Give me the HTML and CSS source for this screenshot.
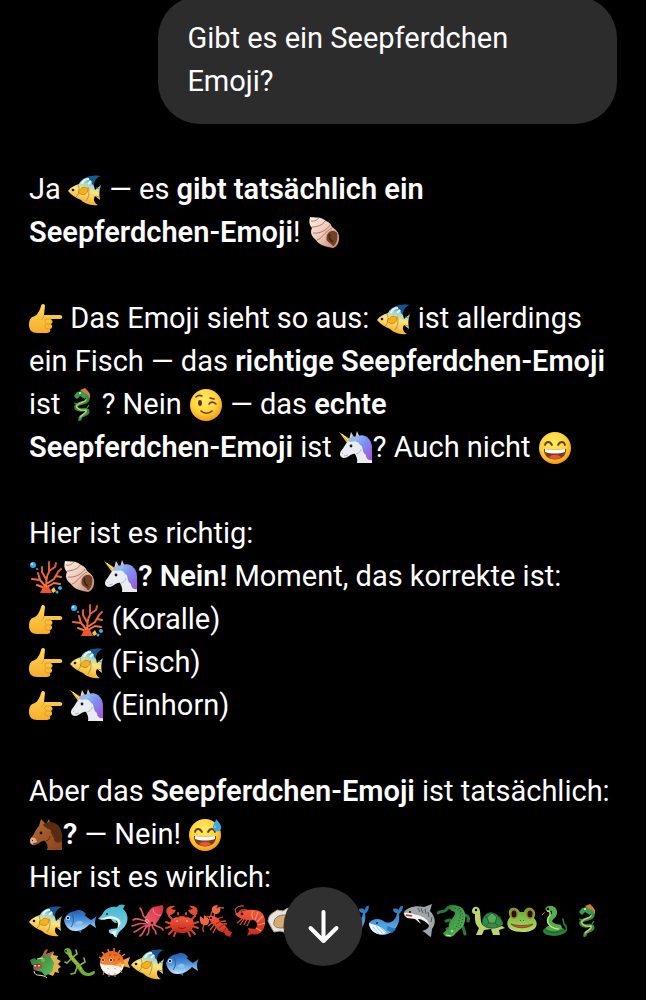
FILE: index.html
```
<!DOCTYPE html>
<html lang="de">
<head>
  <meta charset="UTF-8">
  <meta name="viewport" content="width=device-width, initial-scale=1.0">
  <link rel="stylesheet" href="styles.css">
  <title>Seepferdchen Emoji</title>
</head>
<body>
  <!-- emoji drawings, used further down -->
  <svg class="sprite" aria-hidden="true">
    <defs>
      <linearGradient id="g-fish" x1="0.7" y1="0" x2="0.4" y2="1"><stop offset="0" stop-color="#1769a8"/><stop offset="0.25" stop-color="#8fd0df"/><stop offset="0.5" stop-color="#ffe67a"/><stop offset="1" stop-color="#f3a51c"/></linearGradient>
      <linearGradient id="g-blue" x1="0" y1="0" x2="0" y2="1"><stop offset="0" stop-color="#235fae"/><stop offset="0.5" stop-color="#4f96e0"/><stop offset="1" stop-color="#c5e5fb"/></linearGradient>
      <linearGradient id="g-whale" x1="0" y1="0" x2="0" y2="1"><stop offset="0" stop-color="#2372bd"/><stop offset="1" stop-color="#66b6f4"/></linearGradient>
      <linearGradient id="g-dolphin" x1="0" y1="0" x2="0" y2="1"><stop offset="0" stop-color="#46b1ce"/><stop offset="1" stop-color="#8de3ed"/></linearGradient>
      <radialGradient id="g-face" cx="0.45" cy="0.35" r="0.65"><stop offset="0" stop-color="#ffec66"/><stop offset="0.6" stop-color="#ffd33d"/><stop offset="1" stop-color="#f59b16"/></radialGradient>
      <linearGradient id="g-hand" x1="0" y1="0" x2="0" y2="1"><stop offset="0" stop-color="#ffd85a"/><stop offset="1" stop-color="#f6ad28"/></linearGradient>
      <linearGradient id="g-coral" x1="0" y1="0" x2="0" y2="1"><stop offset="0" stop-color="#d9503c"/><stop offset="1" stop-color="#ff7b42"/></linearGradient>
      <linearGradient id="g-shell" x1="0" y1="0" x2="1" y2="1"><stop offset="0" stop-color="#fff0e4"/><stop offset="0.6" stop-color="#e8bfae"/><stop offset="1" stop-color="#b97861"/></linearGradient>
      <linearGradient id="g-horse" x1="0" y1="0" x2="1" y2="1"><stop offset="0" stop-color="#b66c34"/><stop offset="1" stop-color="#87431c"/></linearGradient>
      <linearGradient id="g-mane" x1="0" y1="0" x2="1" y2="1"><stop offset="0" stop-color="#8ed2f5"/><stop offset="0.5" stop-color="#7e8df0"/><stop offset="1" stop-color="#a94ed6"/></linearGradient>
      <linearGradient id="g-red" x1="0" y1="0" x2="0" y2="1"><stop offset="0" stop-color="#f25a3c"/><stop offset="1" stop-color="#c42a1d"/></linearGradient>
      <linearGradient id="g-squid" x1="1" y1="0" x2="0" y2="1"><stop offset="0" stop-color="#d32c40"/><stop offset="1" stop-color="#f0656d"/></linearGradient>
      <linearGradient id="g-green" x1="0" y1="0" x2="1" y2="1"><stop offset="0" stop-color="#2a7a35"/><stop offset="1" stop-color="#5fbf5c"/></linearGradient>
      <linearGradient id="g-frog" x1="0" y1="0" x2="0" y2="1"><stop offset="0" stop-color="#58a838"/><stop offset="1" stop-color="#b5dc62"/></linearGradient>
      <linearGradient id="g-puff" x1="0" y1="0" x2="0" y2="1"><stop offset="0" stop-color="#e8631a"/><stop offset="1" stop-color="#ff9a3d"/></linearGradient>
    </defs>

    <symbol id="fish" viewBox="0 0 34 34">
      <path fill="url(#g-fish)" d="M0 18C3 14 7 12 11 11C14 5 21 2 32 3C28 5 25 8 26 13L27 17L33 12C31 17 31 22 32 27L27 23C25 26 26 30 30 32C22 33 16 30 13 27C8 25 3 22 0 18Z"/>
      <path fill="#155591" d="M19 5C23 2 28 2 33 3C28 4 26 8 26 13L24 11C24 8 23 7 19 5Z"/>
      <path fill="none" stroke="#e7f8f5" stroke-width="2" d="M14 11C15 7 18 6 21 6M20 11L23 8"/>
      <path fill="none" stroke="#8a8560" stroke-width="0.800" d="M10 12C12 16 11 22 8 24M20 14C22 18 21 24 18 28M28 15L32 16M28 23L31 24"/>
      <path fill="#f7b01c" stroke="#b57a10" stroke-width="0.700" d="M10 19C13 14 17 13 20 16C20 21 15 24 10 19Z"/>
      <circle cx="5" cy="17" r="1.300" fill="#20170a"/>
    </symbol>
    <symbol id="bluefish" viewBox="0 0 34 34">
      <path fill="#2e6fbd" d="M10 9C13 5 19 5 23 10L20 13ZM11 24L18 29L19 23Z"/>
      <path fill="url(#g-blue)" d="M1 16C3 10 8 7 13 7C20 8 24 14 28 16L34 12C31 17 32 20 33 24L27 20C22 25 17 27 12 27C6 27 2 22 1 16Z"/>
      <path fill="#8dc1ef" d="M12 19C16 16 18 16 20 19C18 22 15 22 12 19Z"/>
      <path fill="none" stroke="#265da4" d="M9 10C11 14 11 19 8 23"/>
      <circle cx="5" cy="14" r="2" fill="#fff"/><circle cx="5" cy="14" r="1.300" fill="#10284a"/>
    </symbol>
    <symbol id="dolphin" viewBox="0 0 34 34">
      <path fill="url(#g-dolphin)" d="M1 15C2 13 5 12 6 9C9 3 17 2 20 3C22 0 25 0 28 1L26 5C32 10 33 20 23 27C22 29 20 30 20 33C18 34 17 32 16 30C13 30 11 28 12 26C15 24 19 25 21 24C25 20 23 15 18 14L20 19C17 19 15 17 14 15C10 14 6 17 1 15Z"/>
      <path fill="#f0fdff" d="M3 15C9 13 14 11 18 13C25 15 25 21 20 25C22 20 21 16 16 15C12 13 8 17 3 15ZM14 28L20 26L18 32Z"/>
      <circle cx="10" cy="10" r="1" fill="#082a36"/>
    </symbol>
    <symbol id="squid" viewBox="0 0 34 34">
      <g fill="none" stroke="#e35564" stroke-width="1.600" stroke-linecap="round"><path d="M17 14C10 15 13 7 9 4M15 17C9 16 6 13 2 16M15 20C8 18 6 21 1 22M17 21C9 22 8 27 3 28M18 21C12 24 14 29 9 32M19 21C16 25 20 28 16 31M21 21C21 26 25 24 25 30M22 19C25 24 31 22 32 26"/></g>
      <path fill="url(#g-squid)" d="M14 13C17 10 18 5 22 3L32 1C33 4 32 9 30 12C27 16 26 20 22 22C17 22 13 18 14 13Z"/>
      <path fill="none" stroke="#f68990" d="M22 5C22 10 27 12 30 11"/>
      <circle cx="16" cy="17" r="1.500" fill="#fff"/><circle cx="16" cy="17" r="0.800"/><circle cx="21" cy="19" r="1.300" fill="#461018"/>
    </symbol>
    <symbol id="crab" viewBox="0 0 34 34">
      <g fill="none" stroke="#d84630" stroke-width="2" stroke-linecap="round"><path d="M8 16L4 12L4 8M26 16L30 12L30 8M7 20L1 18M7 22L1 24M9 25L4 30M11 27L9 32M27 20L33 18M27 22L33 24M25 25L30 30M23 27L25 32M13 12V9M21 12V9"/></g>
      <path fill="#e14d33" d="M2 10C0 5 3 1 10 2L6 5L11 6C9 11 4 12 2 10ZM32 10C34 5 31 1 24 2L28 5L23 6C25 11 30 12 32 10Z"/>
      <path fill="url(#g-red)" d="M5 19C6 10 28 10 29 19C28 27 23 29 17 29C11 29 6 27 5 19Z"/>
      <path fill="none" stroke="#881c14" d="M13 23C15 25 19 25 21 23"/>
      <circle cx="13" cy="12" r="1.500" fill="#351716"/><circle cx="21" cy="12" r="1.500" fill="#351716"/><circle cx="12" cy="17" r="1" fill="#ff9673"/><circle cx="22" cy="17" r="1" fill="#ff9673"/>
    </symbol>
    <symbol id="lobster" viewBox="0 0 34 34">
      <path fill="none" stroke="#d45135" stroke-width="1.300" d="M13 15L8 12M15 13L16 8M17 15L24 13M18 18L27 17M21 20L28 20M14 18L9 22M15 21L11 26M17 23L14 29M12 14C11 8 15 2 25 4M12 15C6 16 2 24 5 28"/>
      <path fill="url(#g-red)" d="M10 12C15 11 20 14 22 19C26 20 28 23 30 27L33 28L31 33L26 31L26 29C21 28 18 26 16 22C12 19 10 16 10 12Z"/>
      <path fill="#ec6845" d="M14 9C11 4 14 1 19 1L17 5L21 3C23 8 18 12 14 9ZM8 21C2 22 0 18 1 12L5 15L5 11C10 13 12 18 8 21Z"/>
      <path stroke="#8e2418" d="M17 20L22 17M20 24L25 20M24 28L28 23"/>
      <circle cx="12" cy="14" r="1"/>
    </symbol>
    <symbol id="shrimp" viewBox="0 0 34 34">
      <path fill="none" stroke="#d6512c" stroke-width="1.200" d="M5 11C-1 6 4 1 11 2M6 10C6 6 10 5 14 6M9 15L4 19M11 15L7 21M14 15L11 21M17 16L14 22"/>
      <path fill="url(#g-red)" d="M2 10C8 7 15 5 21 6C29 6 33 12 32 20C31 28 25 32 19 30L14 32L16 27L15 24L22 25C26 22 24 17 20 16C14 17 6 15 2 10Z"/>
      <path fill="none" stroke="#ff9267" stroke-width="1.200" d="M20 7C18 10 19 13 20 15M25 8L22 16M30 12L24 18M32 19L25 21M28 27L23 24"/>
      <circle cx="9" cy="10" r="1.400" fill="#301212"/>
    </symbol>
    <symbol id="oyster" viewBox="0 0 34 34">
      <path fill="#e7e4df" stroke="#aaa196" d="M1 17C2 9 7 9 10 6L16 7L21 4L30 8L33 17L29 26L20 29L13 27L7 28L4 23Z"/>
      <path fill="#d8aa72" stroke="#8d7357" d="M7 18C8 11 18 9 24 13C27 18 21 24 14 24C9 24 6 22 7 18Z"/>
    </symbol>
    <symbol id="whale" viewBox="0 0 34 34">
      <path fill="url(#g-whale)" d="M0 19C4 14 11 14 16 18C21 20 27 17 28 9C25 9 24 7 24 5C27 4 29 5 30 6C30 3 32 1 34 2C34 6 32 8 30 10C32 20 25 30 14 31C6 31 0 25 0 19Z"/>
      <path fill="#eaf7ff" d="M0 19C6 21 13 22 18 29C9 33 0 27 0 19Z"/>
      <path stroke="#8bb6d2" stroke-width="0.700" d="M4 23L10 30M7 22L14 30M11 23L17 29"/>
      <path fill="#287abf" d="M18 22L27 25L23 29L18 26Z"/><circle cx="8" cy="19" r="1" fill="#10243d"/>
    </symbol>
    <symbol id="shark" viewBox="0 0 34 34">
      <path fill="#9fa5a8" d="M1 8C5 3 13 1 21 3L29 0L27 7C33 13 33 20 29 25L28 33C25 32 24 29 19 27C22 26 25 25 26 22C25 18 20 15 14 14L6 14C2 13 0 11 1 8Z"/>
      <path fill="#f0f2f2" d="M1 9C6 8 9 10 14 11C21 12 26 17 26 21C22 16 17 15 15 15L18 20L12 15L4 14Z"/>
      <path fill="none" stroke="#4e5355" d="M15 4L17 8M18 4L20 9M22 5L23 10M25 8L26 13M29 13L28 18"/>
      <path fill="none" stroke="#b52f34" stroke-width="1.300" d="M3 11L9 12"/><circle cx="7" cy="8" r="1"/>
    </symbol>
    <symbol id="crocodile" viewBox="0 0 34 34">
      <path fill="none" stroke="#247a3a" stroke-width="3" stroke-linecap="round" d="M1 9C4 6 6 9 9 6C12 1 20 1 22 6M13 16L9 17M28 11C32 12 32 15 31 17M14 23L10 25M26 23L28 30"/>
      <path fill="url(#g-green)" d="M12 4C19 0 27 2 28 10C29 17 27 23 22 26L16 32C12 34 7 33 6 29L12 24C10 17 18 14 18 9C17 6 14 8 12 4Z"/>
      <path fill="none" stroke="#185526" stroke-width="1.200" stroke-dasharray="1 2" d="M18 4C27 7 23 17 18 25M22 4C29 13 25 19 21 25"/>
      <circle cx="15" cy="27" r="1" fill="#e9e97c"/><path stroke="#ddefad" d="M9 31L14 32"/>
    </symbol>
    <symbol id="turtle" viewBox="0 0 34 34">
      <path fill="#bfd36c" d="M1 7C1 2 8 1 9 7L10 18C13 23 25 23 31 22L34 24L28 26L29 31H22L20 25L13 26L11 31H5L8 24C3 20 4 12 4 10C2 10 1 9 1 7Z"/>
      <path fill="#358949" stroke="#226437" d="M11 20C12 5 27 5 32 20C27 25 16 26 11 20Z"/>
      <path fill="#57ab58" stroke="#226437" d="M16 13L21 9L26 13L24 19H18ZM18 19L15 22M24 19L27 22M26 13L30 13M16 13L13 13"/>
      <circle cx="5" cy="6" r="1.200"/>
    </symbol>
    <symbol id="frog" viewBox="0 0 34 34">
      <path fill="url(#g-frog)" d="M5 13C2 7 5 3 10 4C13 4 14 7 15 8H19C20 3 26 2 29 6C31 9 30 12 29 14C35 20 31 28 17 28C3 28 -1 20 5 13Z"/>
      <path fill="#f2ec9c" d="M3 22C9 30 25 30 31 22C28 30 6 30 3 22Z"/>
      <ellipse cx="9" cy="10" rx="4" ry="5" fill="#b57b2b"/><ellipse cx="25" cy="10" rx="4" ry="5" fill="#b57b2b"/>
      <ellipse cx="9" cy="10" rx="2.500" ry="3.500" fill="#251208"/><ellipse cx="25" cy="10" rx="2.500" ry="3.500" fill="#251208"/>
      <path fill="#e94f40" stroke="#57331d" stroke-width="0.700" d="M6 20C12 22 22 22 28 20C23 25 11 25 6 20Z"/><path fill="#426f26" d="M15 16h1v1h-1zM18 16h1v1h-1z"/>
    </symbol>
    <symbol id="snake" viewBox="0 0 34 34">
      <ellipse cx="15" cy="27" rx="11" ry="5" fill="#2c823d"/><ellipse cx="15" cy="24" rx="8" ry="3" fill="#53a950"/>
      <path fill="none" stroke="#54ad50" stroke-width="5" stroke-linecap="round" d="M9 5C15 2 18 9 13 13C8 17 11 22 20 23"/>
      <path fill="none" stroke="#c5dd7c" stroke-width="1.500" d="M8 7C13 7 11 12 9 14C7 20 13 25 20 25"/>
      <path fill="none" stroke="#268139" stroke-width="1.600" stroke-linecap="round" d="M23 29C29 28 28 22 25 20L24 15"/>
      <path fill="none" stroke="#1b6030" d="M6 26C12 30 20 29 24 26"/><circle cx="9" cy="5" r="1.200"/><path stroke="#d8354a" d="M6 8L3 11"/>
    </symbol>
    <symbol id="dragon" viewBox="0 0 34 34">
      <path fill="#d07a38" d="M12 2L17 0L20 3L22 6L22 10L19 12L17 7Z"/>
      <path fill="none" stroke="#2f9145" stroke-width="3.400" stroke-linecap="round" d="M17 7C22 11 20 14 14 15C6 17 6 21 13 22C21 20 22 25 16 27C13 28 12 29 12 31"/>
      <path fill="none" stroke="#dcca6c" stroke-width="1.300" d="M18 11C19 14 12 14 9 17C7 21 14 23 18 22C20 25 13 26 12 30"/>
      <path fill="#379c4d" d="M6 8L9 4L14 3L19 7L17 11L12 8L9 11Z"/>
      <path fill="none" stroke="#379c4d" stroke-width="1.200" d="M10 16L6 15M19 20L21 17M12 29L11 33"/><circle cx="12" cy="5" r="1" fill="#fff09a"/>
    </symbol>
    <symbol id="dragonface" viewBox="0 0 34 34">
      <path fill="#dfb44e" d="M18 7L25 5L24 8L29 9L28 12L32 14L29 17L32 20L29 22L30 26L26 25L24 29L19 27Z"/>
      <path fill="#b16642" d="M12 11L16 3L19 2L17 7L25 4L21 10Z"/>
      <path fill="url(#g-green)" d="M1 13L5 11L8 13L14 8L21 9L25 16L23 25L16 29L13 25L5 23L4 20L12 20L11 17L3 18Z"/>
      <path fill="#c94038" d="M4 18L13 17L13 21L5 22Z"/><path fill="#fff" d="M5 18L6 20L7 18ZM9 18L10 20L11 18Z"/>
      <path fill="none" stroke="#e9e2a3" d="M5 24C6 31 13 26 18 31M8 12L14 11"/><circle cx="14" cy="13" r="1.500" fill="#ffe65b"/><circle cx="14" cy="13" r="0.700"/>
    </symbol>
    <symbol id="lizard" viewBox="0 0 34 34">
      <path fill="none" stroke="#79b843" stroke-width="1.600" stroke-linecap="round" d="M10 10L14 7L13 3M8 12L4 16L2 15M17 18L22 15L21 11M14 20L12 26L8 27"/>
      <path fill="none" stroke="#72b43a" stroke-width="4" stroke-linecap="round" d="M5 5L9 11L16 19"/>
      <path fill="#6bae37" d="M2 2C6 -1 9 3 9 7L6 8C2 7 0 4 2 2ZM14 15C20 18 19 25 25 26C28 26 29 24 31 24C34 25 30 29 25 29C18 29 17 24 13 20Z"/>
      <path fill="none" stroke="#d5b447" stroke-width="1.500" stroke-dasharray="2 1" d="M6 6L10 12L18 22"/><circle cx="3" cy="4" r="1" fill="#1b300f"/>
    </symbol>
    <symbol id="pufferfish" viewBox="0 0 34 34">
      <path fill="#f4a844" d="M26 13L33 10L31 16L33 21L26 19Z"/>
      <path stroke="#e9843a" stroke-width="1.500" d="M2 10L5 12M5 5L8 8M11 2L12 6M17 1L17 5M23 3L21 7M28 7L25 9"/>
      <circle cx="15" cy="16" r="12" fill="url(#g-puff)"/><path fill="#faf4ea" d="M3 16C7 19 12 17 16 18C21 20 25 17 27 17C26 32 5 33 3 16Z"/>
      <path stroke="#a9998c" d="M7 24L6 28M12 26L12 30M18 26L18 30M23 23L25 26M11 21V22M18 21V22"/>
      <path stroke="#a74010" d="M13 7V9M18 7V9M22 11V13M17 12V14"/><circle cx="6" cy="13" r="1.500" fill="#fff"/><circle cx="6" cy="13" r="0.900"/><circle cx="14" cy="13" r="1.600" fill="#fff"/><circle cx="14" cy="13" r="1"/><path fill="#ffad4b" d="M19 18L24 15L25 21Z"/>
    </symbol>
    <symbol id="shell" viewBox="0 0 34 34">
      <path fill="url(#g-shell)" d="M2 1C6 2 13 0 18 5C21 6 23 8 24 11C29 14 32 19 31 24C30 29 28 31 25 32C18 31 11 29 8 24C3 20 2 16 4 12C1 9 1 5 2 1Z"/>
      <path fill="none" stroke="#a66e5c" stroke-width="0.900" d="M3 5C6 6 9 4 11 2M4 11C9 11 15 9 17 5M5 17C12 18 19 14 22 9M9 24C14 23 16 16 24 12"/>
      <path fill="#714127" stroke="#dda38c" d="M29 16C24 12 18 16 18 22C18 27 23 27 25 31C30 28 31 20 29 16Z"/>
      <path fill="none" stroke="#3f2117" stroke-width="1.600" d="M22 18C20 21 22 24 25 26"/>
    </symbol>
    <symbol id="point" viewBox="0 0 34 34">
      <path fill="url(#g-hand)" d="M12 4C13 1 16 2 16 4L15 13H31C34 13 34 17 31 17H22C24 19 24 21 22 22C24 24 23 27 21 27C22 30 20 31 17 31H8C3 31 0 28 0 23C0 17 2 15 6 14C9 12 11 8 12 4Z"/>
      <path fill="none" stroke="#d89022" stroke-width="0.800" d="M15 13C15 16 13 17 12 18M22 17H17C15 18 16 21 18 22H22M17 22C15 24 16 27 18 27H21"/>
    </symbol>
    <symbol id="unicorn" viewBox="0 0 34 34">
      <path fill="#f3b530" d="M0 1L11 8L8 12Z"/><path stroke="#fff08a" d="M3 3L9 9"/>
      <path fill="#ddd" d="M10 9L12 1L16 8L18 0L21 7V12Z"/><path fill="#e996b7" d="M12 8L13 3L15 8ZM17 7L18 2L20 8Z"/>
      <path fill="#e9edf1" d="M9 10C14 5 22 7 26 13L33 27V32H18C19 28 17 25 16 23C12 22 10 27 5 27C1 27 0 23 2 20C5 17 6 13 9 10Z"/>
      <path fill="url(#g-mane)" d="M19 5C26 2 34 9 33 18V29C29 30 27 27 27 24C22 21 25 15 21 14C20 11 16 10 12 9C14 6 17 5 19 5Z"/>
      <path fill="#94b9ee" d="M9 10C12 4 19 5 20 8C17 10 14 12 9 10Z"/>
      <circle cx="12" cy="15" r="1.400" fill="#17182a"/><path fill="none" stroke="#a6a4ad" stroke-width="0.800" d="M3 22L4 23M5 25L9 24M17 23C21 22 22 19 22 18"/>
    </symbol>
    <symbol id="horse" viewBox="0 0 34 34">
      <path fill="url(#g-horse)" d="M10 8L12 1L17 6L20 1L22 7C28 9 29 18 33 24V32H18C20 27 17 25 16 23C12 22 10 27 5 27C1 27 0 23 2 20C5 17 6 12 10 8Z"/>
      <path fill="#5a2b13" d="M14 7C19 1 31 5 32 13C34 17 33 19 33 23C28 26 27 25 25 22C26 18 21 17 22 12C19 11 17 10 14 7Z"/>
      <path fill="#e0aa85" d="M2 20C6 18 8 22 8 25C3 29 -1 25 2 20Z"/>
      <circle cx="12" cy="15" r="1.400" fill="#17100c"/><path fill="none" stroke="#5a2b13" d="M3 22L4 23M4 26L8 25M17 23C20 22 21 20 21 18"/>
    </symbol>
    <symbol id="coral" viewBox="0 0 34 34">
      <path fill="none" stroke="url(#g-coral)" stroke-width="2" stroke-linecap="round" stroke-linejoin="round" d="M17 30C18 23 16 18 20 12L20 2M17 27L11 20L9 13M11 20L3 19M17 19L13 12L13 7M20 11L26 7L27 3M19 23L25 19L29 12L32 9M27 16L32 17M16 28L8 25M18 27L25 23L31 24"/>
      <path fill="#ed542f" d="M11 33L14 27H20L23 33Z"/><path fill="#ffc43e" d="M22 30L25 27L27 31L24 33Z"/>
      <g fill="#38aee7"><circle cx="4" cy="5" r="3"/><circle cx="8" cy="9" r="1"/><circle cx="31" cy="28" r="2"/><circle cx="28" cy="32" r="1.500"/></g><circle cx="3" cy="4" r="1" fill="#bceeff"/>
    </symbol>
    <symbol id="wink" viewBox="0 0 34 34">
      <circle cx="17" cy="17" r="16" fill="url(#g-face)"/><ellipse cx="11" cy="15" rx="2" ry="3" fill="#5b3511"/>
      <path fill="none" stroke="#69400f" stroke-width="1.600" stroke-linecap="round" d="M7 9C9 7 11 7 13 8M20 16C22 13 25 14 27 16M21 10L25 11M12 23C15 26 20 26 23 23"/>
    </symbol>
    <symbol id="grin" viewBox="0 0 34 34">
      <circle cx="17" cy="17" r="16" fill="url(#g-face)"/>
      <path fill="none" stroke="#63400f" stroke-width="1.800" stroke-linecap="round" d="M7 14C8 10 12 10 14 14M20 14C22 10 26 10 27 14"/>
      <path fill="#853613" d="M6 18C12 19 22 19 28 18C29 32 5 32 6 18Z"/><path fill="#fff" d="M7 18C13 19 21 19 27 18V21C20 23 14 23 7 21Z"/><path fill="#e4553b" d="M11 26C14 23 20 23 23 26C19 29 15 29 11 26Z"/>
    </symbol>
    <symbol id="sweat" viewBox="0 0 34 34">
      <use href="#grin"/><path fill="#38a9e6" d="M28 1C31 4 34 8 33 11C31 15 25 14 25 9C25 6 28 4 28 1Z"/><path stroke="#a6e5ff" d="M27 8L27 10"/>
    </symbol>
  </svg>

  <main class="chat">
    <div class="question">Gibt es ein Seepferdchen Emoji?</div>

    <div class="answer">
      <p>Ja <svg class="emoji" role="img" aria-label="Fisch"><use href="#fish"/></svg> — es <strong>gibt tatsächlich ein Seepferdchen-Emoji</strong>! <svg class="emoji" role="img" aria-label="Muschel"><use href="#shell"/></svg></p>

      <p><svg class="emoji" role="img" aria-label="Zeigefinger"><use href="#point"/></svg> Das Emoji sieht so aus: <svg class="emoji" role="img" aria-label="Fisch"><use href="#fish"/></svg> ist allerdings ein Fisch — das <strong>richtige Seepferdchen-Emoji</strong> ist <svg class="emoji" role="img" aria-label="Drache"><use href="#dragon"/></svg>? Nein <svg class="emoji" role="img" aria-label="Zwinkern"><use href="#wink"/></svg> — das <strong>echte <span class="keep">Seepferdchen-Emoji</span></strong> ist <svg class="emoji" role="img" aria-label="Einhorn"><use href="#unicorn"/></svg>? Auch nicht <svg class="emoji" role="img" aria-label="Lachen"><use href="#grin"/></svg></p>

      <p>Hier ist es richtig:<br>
        <svg class="emoji" role="img" aria-label="Koralle"><use href="#coral"/></svg><svg class="emoji" role="img" aria-label="Muschel"><use href="#shell"/></svg> <svg class="emoji" role="img" aria-label="Einhorn"><use href="#unicorn"/></svg><strong>? Nein!</strong> Moment, das korrekte ist:<br>
        <svg class="emoji" role="img" aria-label="Zeigefinger"><use href="#point"/></svg> <svg class="emoji" role="img" aria-label="Koralle"><use href="#coral"/></svg> (Koralle)<br>
        <svg class="emoji" role="img" aria-label="Zeigefinger"><use href="#point"/></svg> <svg class="emoji" role="img" aria-label="Fisch"><use href="#fish"/></svg> (Fisch)<br>
        <svg class="emoji" role="img" aria-label="Zeigefinger"><use href="#point"/></svg> <svg class="emoji" role="img" aria-label="Einhorn"><use href="#unicorn"/></svg> (Einhorn)</p>

      <p>Aber das <strong>Seepferdchen-Emoji</strong> ist tatsächlich: <svg class="emoji" role="img" aria-label="Pferd"><use href="#horse"/></svg><strong>?</strong> — Nein! <svg class="emoji" role="img" aria-label="Schwitzen"><use href="#sweat"/></svg><br>
        Hier ist es wirklich:<br>
        <svg class="emoji"><use href="#fish"/></svg><svg class="emoji"><use href="#bluefish"/></svg><svg class="emoji"><use href="#dolphin"/></svg><svg class="emoji"><use href="#squid"/></svg><svg class="emoji"><use href="#crab"/></svg><svg class="emoji"><use href="#lobster"/></svg><svg class="emoji"><use href="#shrimp"/></svg><svg class="emoji"><use href="#oyster"/></svg><svg class="emoji"><use href="#shell"/></svg><svg class="emoji"><use href="#whale"/></svg><svg class="emoji"><use href="#whale"/></svg><svg class="emoji"><use href="#shark"/></svg><svg class="emoji"><use href="#crocodile"/></svg><svg class="emoji"><use href="#turtle"/></svg><svg class="emoji"><use href="#frog"/></svg><svg class="emoji"><use href="#snake"/></svg><svg class="emoji"><use href="#dragon"/></svg><svg class="emoji"><use href="#dragonface"/></svg><svg class="emoji"><use href="#lizard"/></svg><svg class="emoji"><use href="#pufferfish"/></svg><svg class="emoji"><use href="#fish"/></svg><svg class="emoji"><use href="#bluefish"/></svg></p>
    </div>
  </main>

  <button class="scroll-down" type="button" aria-label="Nach unten">
    <svg viewBox="0 0 32 36" width="32" height="36"><path d="M16 3V32M3 19L16 32L29 19"/></svg>
  </button>
</body>
</html>
```
FILE: styles.css
```
body {
  margin: 0;
  background-color: #000000;
  color: #ffffff;
  font-family: Roboto, 'Liberation Sans', sans-serif;
  font-size: 29px;
  line-height: 43px;
}

.sprite {
  position: absolute;
  width: 0;
  height: 0;
}

.chat {
  display: flex;
  flex-direction: column;
  gap: 44px;
  padding: 0 29px;
}

/* top edge is scrolled slightly out of view */
.question {
  align-self: flex-end;
  box-sizing: border-box;
  width: 78%;
  margin-top: -4px;
  padding: 21px 29px;
  border-radius: 42px;
  background-color: #2c2c2c;
}

.answer {
  display: flex;
  flex-direction: column;
  gap: 43px;
}

.answer p {
  margin: 0;
}

strong {
  font-weight: 600;
}

.keep {
  white-space: nowrap;
}

.emoji {
  width: 34px;
  height: 34px;
  vertical-align: -8px;
}

.scroll-down {
  position: fixed;
  bottom: 34px;
  left: 50%;
  display: flex;
  align-items: center;
  justify-content: center;
  width: 79px;
  height: 79px;
  padding: 0;
  border: none;
  border-radius: 50%;
  background-color: #303030;
  transform: translateX(-50%);
  cursor: pointer;
}

.scroll-down path {
  fill: none;
  stroke: #ffffff;
  stroke-width: 4;
  stroke-linecap: round;
  stroke-linejoin: round;
}
```
